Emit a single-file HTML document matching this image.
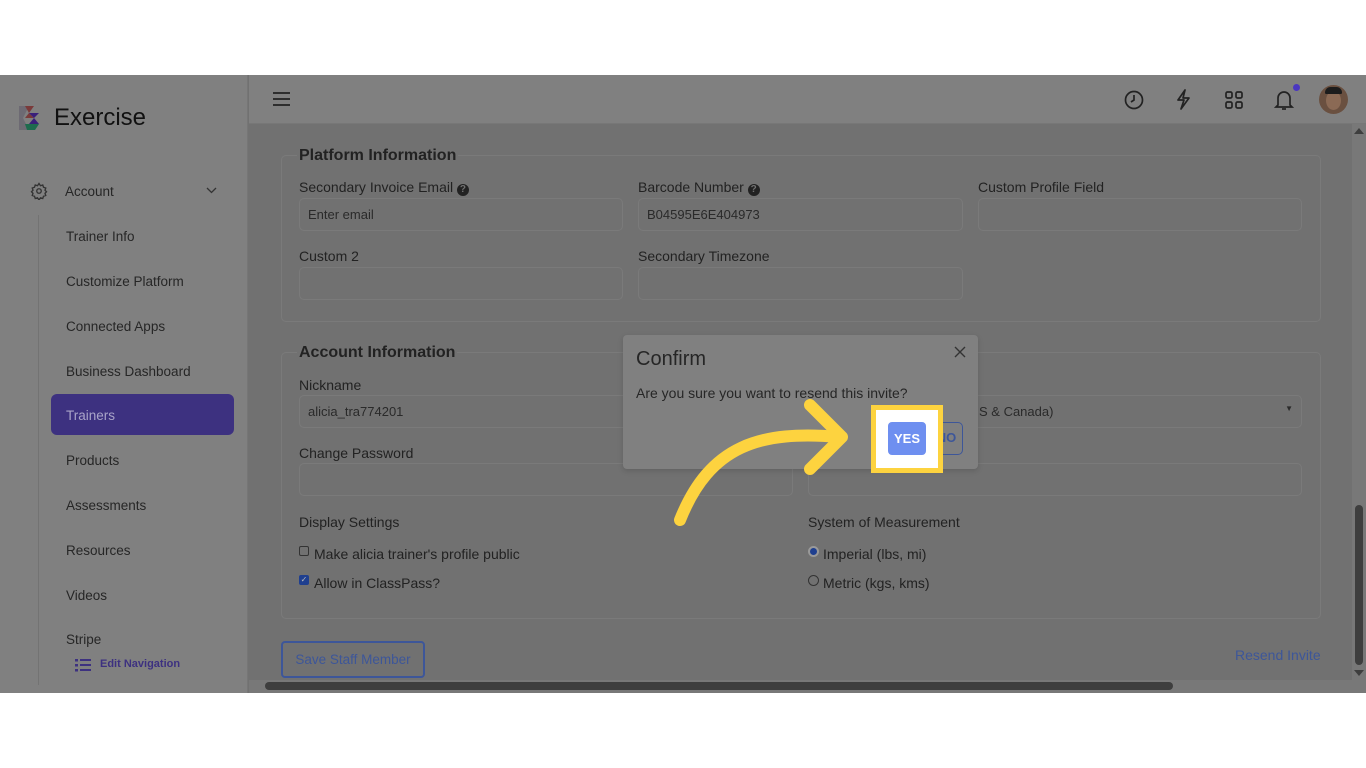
<!DOCTYPE html>
<html><head><style>
*{box-sizing:border-box;margin:0;padding:0}
body{width:1366px;height:768px;background:#fff;position:relative;overflow:hidden;font-family:"Liberation Sans",Arial,sans-serif;color:#262626}
.a{position:absolute}
.band{left:0;top:75px;width:1366px;height:618px;background:#717171;overflow:hidden}
.side{left:0;top:0;width:248px;height:618px;background:#808080;border-right:1px solid #767676}
.nav{left:66px;font-size:13.5px;color:#262626}
.hdr{left:249px;top:0;width:1117px;height:49px;background:#808080;border-bottom:1px solid #777}
.card{border:1px solid #7a7a7a;border-radius:5px}
.lg{font-weight:bold;font-size:16px;background:#717171;padding:0 2px;color:#222}
.lb{font-size:14px;color:#222}
.in{border:1px solid #7a7a7a;border-radius:5px;height:33px;font-size:13px;color:#2a2a2a;padding:8px 8px}
</style></head><body>
<div class="a band">
 <div class="a side">
  <svg class="a" style="left:17px;top:29px" width="27" height="27" viewBox="0 0 27 27"><path d="M2 2h10l-6 12 6 12H2z" fill="#6d6a73"/><path d="M8 2h9l-5 7 5 5H8l4-5z" fill="#7a3a3a"/><path d="M12 9h10l-5 5 5 6H12l5-6z" fill="#3a1f7a"/><path d="M8 20h14l-4 6H10z" fill="#1e6b4e"/></svg>
  <div class="a" style="left:54px;top:29px;font-size:24px;color:#111">Exercise</div>
  <svg class="a" style="left:30px;top:107px" width="18" height="18" viewBox="0 0 24 24" fill="none" stroke="#333" stroke-width="1.8"><circle cx="12" cy="12" r="3"/><path d="M12 2l2 3 3-1 1 3 3 1-1 3 2 2-2 2 1 3-3 1-1 3-3-1-2 3-2-3-3 1-1-3-3-1 1-3-2-2 2-2-1-3 3-1 1-3 3 1z"/></svg>
  <div class="a nav" style="left:65px;top:109px">Account</div>
  <svg class="a" style="left:206px;top:112px" width="11" height="8"><path d="M1 1l4.5 4.5L10 1" fill="none" stroke="#333" stroke-width="1.3"/></svg>
  <div class="a" style="left:38px;top:140px;width:1px;height:470px;background:#737373"></div>
  <div class="a nav" style="top:154px">Trainer Info</div>
  <div class="a nav" style="top:199px">Customize Platform</div>
  <div class="a nav" style="top:244px">Connected Apps</div>
  <div class="a nav" style="top:289px">Business Dashboard</div>
  <div class="a" style="left:51px;top:319px;width:183px;height:41px;background:#3d3180;border-radius:6px"></div>
  <div class="a nav" style="top:333px;color:#a9a4c8">Trainers</div>
  <div class="a nav" style="top:378px">Products</div>
  <div class="a nav" style="top:423px">Assessments</div>
  <div class="a nav" style="top:468px">Resources</div>
  <div class="a nav" style="top:513px">Videos</div>
  <div class="a nav" style="top:557px">Stripe</div>
  <svg class="a" style="left:75px;top:583px" width="16" height="14"><g fill="#3d3180"><rect x="0" y="1" width="3" height="2.5"/><rect x="5" y="1" width="11" height="2"/><rect x="0" y="6" width="3" height="2.5"/><rect x="5" y="6" width="11" height="2"/><rect x="0" y="11" width="3" height="2.5"/><rect x="5" y="11" width="11" height="2"/></g></svg>
  <div class="a" style="left:100px;top:583px;font-size:11px;color:#3d3180;font-weight:bold">Edit Navigation</div>
 </div>
 <div class="a hdr">
  <svg class="a" style="left:24px;top:17px" width="17" height="14"><g stroke="#222" stroke-width="1.8"><path d="M0 1h17M0 7h17M0 13h17"/></g></svg>
  <svg class="a" style="left:875px;top:15px" width="20" height="20" viewBox="0 0 20 20" fill="none" stroke="#222" stroke-width="1.7"><circle cx="10" cy="10" r="8.5"/><path d="M10 5v5l-3 2"/></svg>
  <svg class="a" style="left:926px;top:14px" width="16" height="21" viewBox="0 0 16 21" fill="none" stroke="#222" stroke-width="1.7" stroke-linejoin="round"><path d="M10 1L3 11h6l-3 9 8-11H8z"/></svg>
  <svg class="a" style="left:976px;top:16px" width="18" height="18" fill="none" stroke="#222" stroke-width="1.7"><rect x="1" y="1" width="6" height="6" rx="1.5"/><rect x="11" y="1" width="6" height="6" rx="1.5"/><rect x="1" y="11" width="6" height="6" rx="1.5"/><rect x="11" y="11" width="6" height="6" rx="1.5"/></svg>
  <svg class="a" style="left:1025px;top:14px" width="20" height="22" viewBox="0 0 20 22" fill="none" stroke="#222" stroke-width="1.7"><path d="M4 16V9a6 6 0 0112 0v7l2 2H2z"/><path d="M8 20h4"/></svg>
  <div class="a" style="left:1044px;top:9px;width:7px;height:7px;border-radius:50%;background:#4a36c0"></div>
  <div class="a" style="left:1070px;top:10px;width:29px;height:29px;border-radius:50%;background:#6a5040;overflow:hidden"><div class="a" style="left:7px;top:6px;width:15px;height:19px;border-radius:50%;background:#8b6a55"></div><div class="a" style="left:6px;top:2px;width:17px;height:7px;border-radius:8px 8px 2px 2px;background:#1c1c1c"></div></div>
 </div>
 <div class="a card" style="left:281px;top:80px;width:1040px;height:167px"></div>
 <div class="a lg" style="left:297px;top:72px">Platform Information</div>
 <div class="a lb" style="left:299px;top:104px">Secondary Invoice Email <span style="display:inline-block;width:12px;height:12px;border-radius:50%;background:#222;color:#717171;font-size:10px;text-align:center;line-height:12px;font-weight:bold">?</span></div>
 <div class="a lb" style="left:638px;top:104px">Barcode Number <span style="display:inline-block;width:12px;height:12px;border-radius:50%;background:#222;color:#717171;font-size:10px;text-align:center;line-height:12px;font-weight:bold">?</span></div>
 <div class="a lb" style="left:978px;top:104px">Custom Profile Field</div>
 <div class="a in" style="left:299px;top:123px;width:324px">Enter email</div>
 <div class="a in" style="left:638px;top:123px;width:325px">B04595E6E404973</div>
 <div class="a in" style="left:978px;top:123px;width:324px"></div>
 <div class="a lb" style="left:299px;top:173px">Custom 2</div>
 <div class="a lb" style="left:638px;top:173px">Secondary Timezone</div>
 <div class="a in" style="left:299px;top:192px;width:324px"></div>
 <div class="a in" style="left:638px;top:192px;width:325px"></div>
 <div class="a card" style="left:281px;top:277px;width:1040px;height:267px"></div>
 <div class="a lg" style="left:297px;top:269px">Account Information</div>
 <div class="a lb" style="left:299px;top:302px">Nickname</div>
 <div class="a in" style="left:299px;top:320px;width:494px">alicia_tra774201</div>
 <div class="a in" style="left:808px;top:320px;width:494px;padding-left:170px">S &amp; Canada)<span style="position:absolute;right:8px;top:8px;font-size:8px">▼</span></div>
 <div class="a lb" style="left:299px;top:370px">Change Password</div>
 <div class="a in" style="left:299px;top:388px;width:494px"></div>
 <div class="a in" style="left:808px;top:388px;width:494px"></div>
 <div class="a lb" style="left:299px;top:439px">Display Settings</div>
 <div class="a lb" style="left:808px;top:439px">System of Measurement</div>
 <div class="a" style="left:299px;top:471px;width:10px;height:10px;border:1px solid #333;border-radius:2px"></div>
 <div class="a lb" style="left:314px;top:471px">Make alicia trainer's profile public</div>
 <div class="a" style="left:299px;top:500px;width:10px;height:10px;background:#1f3f8f;border-radius:2px;color:#bbb;font-size:8px;line-height:10px;text-align:center">✓</div>
 <div class="a lb" style="left:314px;top:500px">Allow in ClassPass?</div>
 <div class="a" style="left:808px;top:471px;width:11px;height:11px;border-radius:50%;background:#1f3f8f;border:2px solid #999"></div>
 <div class="a lb" style="left:823px;top:471px">Imperial (lbs, mi)</div>
 <div class="a" style="left:808px;top:500px;width:11px;height:11px;border-radius:50%;border:1px solid #333"></div>
 <div class="a lb" style="left:823px;top:500px">Metric (kgs, kms)</div>
 <div class="a" style="left:281px;top:566px;width:144px;height:37px;border:2px solid #3d5699;border-radius:4px;color:#3d5699;font-size:13.5px;text-align:center;line-height:33px">Save Staff Member</div>
 <div class="a" style="left:1235px;top:572px;color:#3d5699;font-size:14px">Resend Invite</div>
 <div class="a" style="left:1352px;top:49px;width:14px;height:556px;background:#787878"></div>
 <div class="a" style="left:1355px;top:430px;width:8px;height:160px;border-radius:4px;background:#3e3e3e"></div>
 <div class="a" style="left:1354px;top:53px;width:0;height:0;border:5px solid transparent;border-bottom:6px solid #3e3e3e;border-top:0"></div>
 <div class="a" style="left:1354px;top:595px;width:0;height:0;border:5px solid transparent;border-top:6px solid #3e3e3e;border-bottom:0"></div>
 <div class="a" style="left:249px;top:605px;width:1117px;height:13px;background:#787878"></div>
 <div class="a" style="left:265px;top:607px;width:908px;height:8px;border-radius:4px;background:#3e3e3e"></div>
 <div class="a" style="left:623px;top:260px;width:355px;height:134px;background:#808080;border-radius:4px;box-shadow:0 2px 6px rgba(0,0,0,.15)"></div>
 <div class="a" style="left:636px;top:273px;font-size:20px;color:#262626">Confirm</div>
 <svg class="a" style="left:954px;top:271px" width="12" height="12"><path d="M1 1l10 10M11 1L1 11" stroke="#333" stroke-width="1.4"/></svg>
 <div class="a" style="left:636px;top:310px;font-size:14px;color:#262626">Are you sure you want to resend this invite?</div>
 <div class="a" style="left:930px;top:347px;width:33px;height:33px;border:1.5px solid #3d5699;border-radius:5px;color:#3d5699;font-weight:bold;font-size:13px;line-height:30px;text-align:center">NO</div>
 <div class="a" style="left:871px;top:330px;width:72px;height:68px;border:5px solid #fdd33f;background:#fff"></div>
 <div class="a" style="left:888px;top:347px;width:38px;height:33px;background:#6e8ff0;border-radius:4px;color:#fff;font-weight:bold;font-size:13px;line-height:33px;text-align:center">YES</div>
 <svg class="a" style="left:660px;top:250px" width="200" height="210" viewBox="0 0 200 210" fill="none" stroke="#fdd33f" stroke-width="12" stroke-linecap="round" stroke-linejoin="round"><path d="M20 195C50 120 100 105 180 112"/><path d="M150 80L182 112L150 144"/></svg>
</div>
</body></html>
